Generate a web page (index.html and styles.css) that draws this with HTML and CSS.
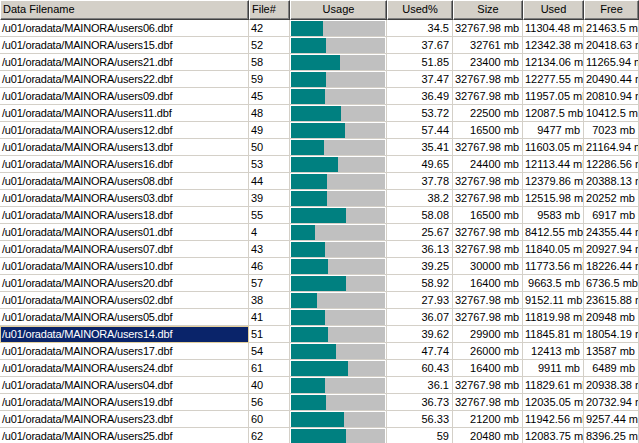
FILE: index.html
```html
<!DOCTYPE html>
<html>
<head>
<meta charset="utf-8">
<title>Datafiles</title>
<link rel="stylesheet" href="styles.css">
</head>
<body>
<div class="grid">
  <div class="row head">
    <div class="hc left">Data Filename</div>
    <div class="hc left">File#</div>
    <div class="hc">Usage</div>
    <div class="hc">Used%</div>
    <div class="hc">Size</div>
    <div class="hc">Used</div>
    <div class="hc">Free</div>
  </div>
  <div class="row"><div class="c name">/u01/oradata/MAINORA/users06.dbf</div><div class="c id">42</div><div class="c usage"><div class="bar"><div class="fill" style="width:34.5%"></div></div></div><div class="c num">34.5</div><div class="c num">32767.98 mb</div><div class="c num">11304.48 mb</div><div class="c num">21463.5 mb</div></div>
  <div class="row"><div class="c name">/u01/oradata/MAINORA/users15.dbf</div><div class="c id">52</div><div class="c usage"><div class="bar"><div class="fill" style="width:37.67%"></div></div></div><div class="c num">37.67</div><div class="c num">32761 mb</div><div class="c num">12342.38 mb</div><div class="c num">20418.63 mb</div></div>
  <div class="row"><div class="c name">/u01/oradata/MAINORA/users21.dbf</div><div class="c id">58</div><div class="c usage"><div class="bar"><div class="fill" style="width:51.85%"></div></div></div><div class="c num">51.85</div><div class="c num">23400 mb</div><div class="c num">12134.06 mb</div><div class="c num">11265.94 mb</div></div>
  <div class="row"><div class="c name">/u01/oradata/MAINORA/users22.dbf</div><div class="c id">59</div><div class="c usage"><div class="bar"><div class="fill" style="width:37.47%"></div></div></div><div class="c num">37.47</div><div class="c num">32767.98 mb</div><div class="c num">12277.55 mb</div><div class="c num">20490.44 mb</div></div>
  <div class="row"><div class="c name">/u01/oradata/MAINORA/users09.dbf</div><div class="c id">45</div><div class="c usage"><div class="bar"><div class="fill" style="width:36.49%"></div></div></div><div class="c num">36.49</div><div class="c num">32767.98 mb</div><div class="c num">11957.05 mb</div><div class="c num">20810.94 mb</div></div>
  <div class="row"><div class="c name">/u01/oradata/MAINORA/users11.dbf</div><div class="c id">48</div><div class="c usage"><div class="bar"><div class="fill" style="width:53.72%"></div></div></div><div class="c num">53.72</div><div class="c num">22500 mb</div><div class="c num">12087.5 mb</div><div class="c num">10412.5 mb</div></div>
  <div class="row"><div class="c name">/u01/oradata/MAINORA/users12.dbf</div><div class="c id">49</div><div class="c usage"><div class="bar"><div class="fill" style="width:57.44%"></div></div></div><div class="c num">57.44</div><div class="c num">16500 mb</div><div class="c num">9477 mb</div><div class="c num">7023 mb</div></div>
  <div class="row"><div class="c name">/u01/oradata/MAINORA/users13.dbf</div><div class="c id">50</div><div class="c usage"><div class="bar"><div class="fill" style="width:35.41%"></div></div></div><div class="c num">35.41</div><div class="c num">32767.98 mb</div><div class="c num">11603.05 mb</div><div class="c num">21164.94 mb</div></div>
  <div class="row"><div class="c name">/u01/oradata/MAINORA/users16.dbf</div><div class="c id">53</div><div class="c usage"><div class="bar"><div class="fill" style="width:49.65%"></div></div></div><div class="c num">49.65</div><div class="c num">24400 mb</div><div class="c num">12113.44 mb</div><div class="c num">12286.56 mb</div></div>
  <div class="row"><div class="c name">/u01/oradata/MAINORA/users08.dbf</div><div class="c id">44</div><div class="c usage"><div class="bar"><div class="fill" style="width:37.78%"></div></div></div><div class="c num">37.78</div><div class="c num">32767.98 mb</div><div class="c num">12379.86 mb</div><div class="c num">20388.13 mb</div></div>
  <div class="row"><div class="c name">/u01/oradata/MAINORA/users03.dbf</div><div class="c id">39</div><div class="c usage"><div class="bar"><div class="fill" style="width:38.2%"></div></div></div><div class="c num">38.2</div><div class="c num">32767.98 mb</div><div class="c num">12515.98 mb</div><div class="c num">20252 mb</div></div>
  <div class="row"><div class="c name">/u01/oradata/MAINORA/users18.dbf</div><div class="c id">55</div><div class="c usage"><div class="bar"><div class="fill" style="width:58.08%"></div></div></div><div class="c num">58.08</div><div class="c num">16500 mb</div><div class="c num">9583 mb</div><div class="c num">6917 mb</div></div>
  <div class="row"><div class="c name">/u01/oradata/MAINORA/users01.dbf</div><div class="c id">4</div><div class="c usage"><div class="bar"><div class="fill" style="width:25.67%"></div></div></div><div class="c num">25.67</div><div class="c num">32767.98 mb</div><div class="c num">8412.55 mb</div><div class="c num">24355.44 mb</div></div>
  <div class="row"><div class="c name">/u01/oradata/MAINORA/users07.dbf</div><div class="c id">43</div><div class="c usage"><div class="bar"><div class="fill" style="width:36.13%"></div></div></div><div class="c num">36.13</div><div class="c num">32767.98 mb</div><div class="c num">11840.05 mb</div><div class="c num">20927.94 mb</div></div>
  <div class="row"><div class="c name">/u01/oradata/MAINORA/users10.dbf</div><div class="c id">46</div><div class="c usage"><div class="bar"><div class="fill" style="width:39.25%"></div></div></div><div class="c num">39.25</div><div class="c num">30000 mb</div><div class="c num">11773.56 mb</div><div class="c num">18226.44 mb</div></div>
  <div class="row"><div class="c name">/u01/oradata/MAINORA/users20.dbf</div><div class="c id">57</div><div class="c usage"><div class="bar"><div class="fill" style="width:58.92%"></div></div></div><div class="c num">58.92</div><div class="c num">16400 mb</div><div class="c num">9663.5 mb</div><div class="c num">6736.5 mb</div></div>
  <div class="row"><div class="c name">/u01/oradata/MAINORA/users02.dbf</div><div class="c id">38</div><div class="c usage"><div class="bar"><div class="fill" style="width:27.93%"></div></div></div><div class="c num">27.93</div><div class="c num">32767.98 mb</div><div class="c num">9152.11 mb</div><div class="c num">23615.88 mb</div></div>
  <div class="row"><div class="c name">/u01/oradata/MAINORA/users05.dbf</div><div class="c id">41</div><div class="c usage"><div class="bar"><div class="fill" style="width:36.07%"></div></div></div><div class="c num">36.07</div><div class="c num">32767.98 mb</div><div class="c num">11819.98 mb</div><div class="c num">20948 mb</div></div>
  <div class="row"><div class="c name selected">/u01/oradata/MAINORA/users14.dbf</div><div class="c id">51</div><div class="c usage"><div class="bar"><div class="fill" style="width:39.62%"></div></div></div><div class="c num">39.62</div><div class="c num">29900 mb</div><div class="c num">11845.81 mb</div><div class="c num">18054.19 mb</div></div>
  <div class="row"><div class="c name">/u01/oradata/MAINORA/users17.dbf</div><div class="c id">54</div><div class="c usage"><div class="bar"><div class="fill" style="width:47.74%"></div></div></div><div class="c num">47.74</div><div class="c num">26000 mb</div><div class="c num">12413 mb</div><div class="c num">13587 mb</div></div>
  <div class="row"><div class="c name">/u01/oradata/MAINORA/users24.dbf</div><div class="c id">61</div><div class="c usage"><div class="bar"><div class="fill" style="width:60.43%"></div></div></div><div class="c num">60.43</div><div class="c num">16400 mb</div><div class="c num">9911 mb</div><div class="c num">6489 mb</div></div>
  <div class="row"><div class="c name">/u01/oradata/MAINORA/users04.dbf</div><div class="c id">40</div><div class="c usage"><div class="bar"><div class="fill" style="width:36.1%"></div></div></div><div class="c num">36.1</div><div class="c num">32767.98 mb</div><div class="c num">11829.61 mb</div><div class="c num">20938.38 mb</div></div>
  <div class="row"><div class="c name">/u01/oradata/MAINORA/users19.dbf</div><div class="c id">56</div><div class="c usage"><div class="bar"><div class="fill" style="width:36.73%"></div></div></div><div class="c num">36.73</div><div class="c num">32767.98 mb</div><div class="c num">12035.05 mb</div><div class="c num">20732.94 mb</div></div>
  <div class="row"><div class="c name">/u01/oradata/MAINORA/users23.dbf</div><div class="c id">60</div><div class="c usage"><div class="bar"><div class="fill" style="width:56.33%"></div></div></div><div class="c num">56.33</div><div class="c num">21200 mb</div><div class="c num">11942.56 mb</div><div class="c num">9257.44 mb</div></div>
  <div class="row"><div class="c name">/u01/oradata/MAINORA/users25.dbf</div><div class="c id">62</div><div class="c usage"><div class="bar"><div class="fill" style="width:59%"></div></div></div><div class="c num">59</div><div class="c num">20480 mb</div><div class="c num">12083.75 mb</div><div class="c num">8396.25 mb</div></div>
</div>
</body>
</html>
```

FILE: styles.css
```css
html, body {
  margin: 0;
  padding: 0;
  background: #ffffff;
  overflow: hidden;
}
body {
  width: 639px;
  height: 443px;
  font-family: "Liberation Sans", Arial, sans-serif;
  font-size: 11px;
  color: #000000;
}
.grid {
  display: flex;
  flex-direction: column;
}
.row {
  display: grid;
  grid-template-columns: 249px 41px 97px 66px 70px 61px 55px;
  height: 17px;
}
.row.head {
  height: 20px;
}
.hc {
  box-sizing: border-box;
  height: 20px;
  background: #d4d0c8;
  border-top: 1px solid #ffffff;
  border-left: 1px solid #ffffff;
  border-right: 1px solid #404040;
  border-bottom: 1px solid #404040;
  box-shadow: inset -1px -1px 0 #808080;
  line-height: 17px;
  text-align: center;
  white-space: nowrap;
  overflow: hidden;
  padding: 0 2px;
}
.hc.left {
  text-align: left;
  padding-left: 2px;
}
.c {
  box-sizing: border-box;
  height: 17px;
  border-right: 1px solid #d4d0c8;
  border-bottom: 1px solid #d4d0c8;
  line-height: 16px;
  white-space: nowrap;
  overflow: hidden;
  padding: 0 3px 0 2px;
}
.name {
  letter-spacing: -0.2px;
}
.num {
  text-align: right;
}
.selected {
  background: #0a246a;
  color: #ffffff;
  border: 1px solid #e3cf9c;
  line-height: 14px;
  padding-left: 1px;
}
.usage {
  padding: 1px 1px 0 1px;
}
.bar {
  height: 15px;
  background: #c0c0c0;
  display: flex;
}
.fill {
  height: 100%;
  background: #008080;
}
```
